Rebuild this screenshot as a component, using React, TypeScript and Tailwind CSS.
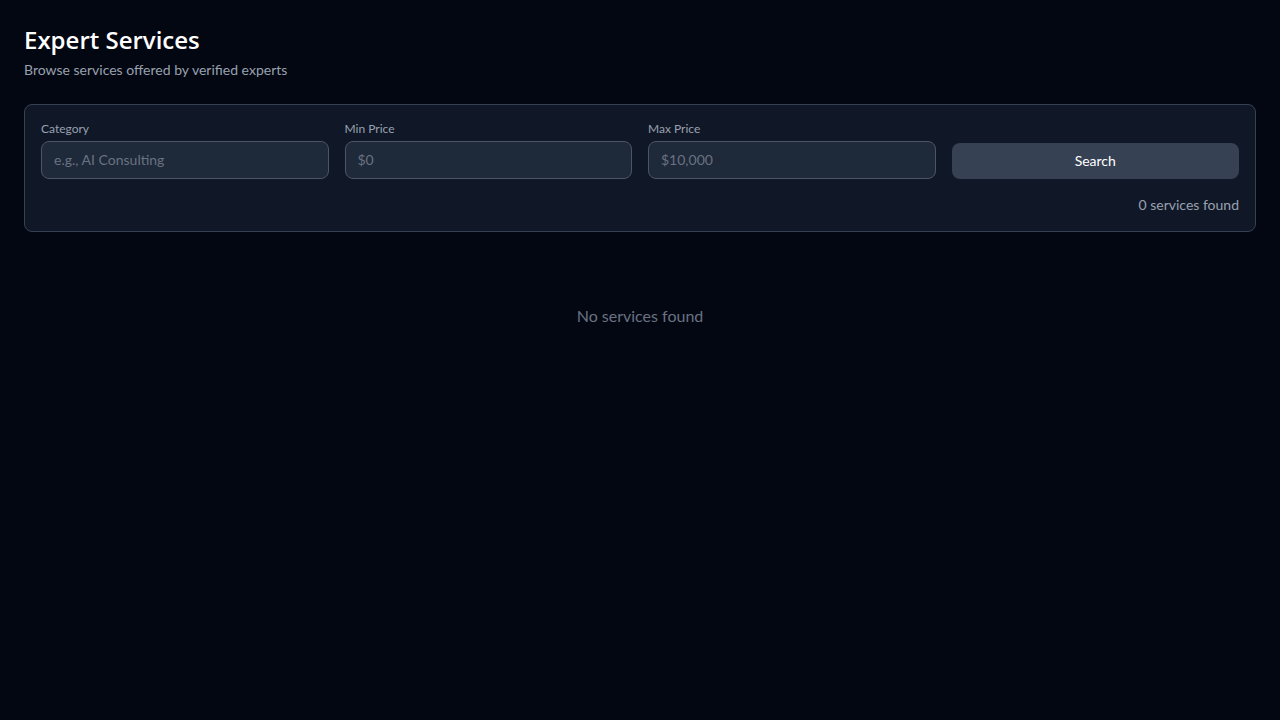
export default function App() {
  return (
    <div
      className="min-h-screen bg-[#030712] p-6 text-white"
      style={{ fontFamily: 'Lato, "Noto Sans", sans-serif' }}
    >
      {/* Header */}
      <h1 className="font-['Open_Sans',sans-serif] text-2xl font-semibold text-white">Expert Services</h1>
      <p className="mt-1 text-sm text-gray-400">Browse services offered by verified experts</p>

      {/* Filters */}
      <div className="mt-6 rounded-lg border border-gray-700 bg-gray-900 p-4">
        <div className="grid grid-cols-4 items-end gap-4">
          <div>
            <label className="mb-1 block text-xs text-gray-400">Category</label>
            <input
              placeholder="e.g., AI Consulting"
              className="w-full rounded-lg border border-gray-600 bg-gray-800 px-3 py-2 text-sm text-white placeholder:text-gray-500 outline-none"
            />
          </div>
          <div>
            <label className="mb-1 block text-xs text-gray-400">Min Price</label>
            <input
              placeholder="$0"
              className="w-full rounded-lg border border-gray-600 bg-gray-800 px-3 py-2 text-sm text-white placeholder:text-gray-500 outline-none"
            />
          </div>
          <div>
            <label className="mb-1 block text-xs text-gray-400">Max Price</label>
            <input
              placeholder="$10,000"
              className="w-full rounded-lg border border-gray-600 bg-gray-800 px-3 py-2 text-sm text-white placeholder:text-gray-500 outline-none"
            />
          </div>
          <button className="h-9 w-full rounded-lg bg-gray-700 text-sm font-normal text-white hover:bg-gray-600">
            Search
          </button>
        </div>
        <p className="mt-4 text-right text-sm text-gray-400">0 services found</p>
      </div>

      {/* Results */}
      <div className="mt-6 py-12 text-center text-base text-gray-500">No services found</div>
    </div>
  );
}
